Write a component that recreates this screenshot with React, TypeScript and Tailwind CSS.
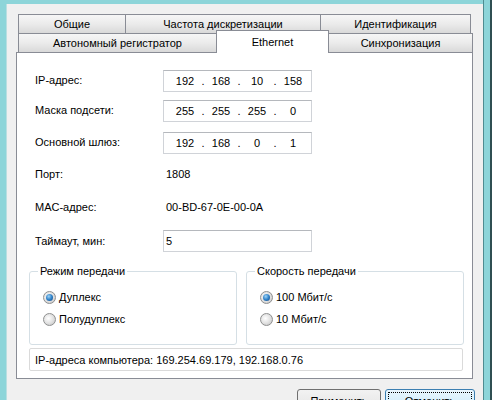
import React from 'react';

function Tab({ label, className }: { label: string; className: string }) {
  return (
    <div
      className={`h-[19px] flex items-center justify-center border-t border-[#898c95] bg-linear-to-b from-[#f6f6f6] via-[#ebebeb] to-[#d9d9d9] ${className}`}
    >
      {label}
    </div>
  );
}

function IpField({ parts }: { parts: string[] }) {
  return (
    <div className="w-[149px] h-[22px] border border-[#d0d3d8] border-t-[#b5b8bd] bg-white flex items-center pl-[6px]">
      {parts.map((p, i) => (
        <React.Fragment key={i}>
          {i > 0 && <span className="w-[6px] text-center">.</span>}
          <span className="w-[30px] text-center">{p}</span>
        </React.Fragment>
      ))}
    </div>
  );
}

function Radio({ label, checked, gap }: { label: string; checked?: boolean; gap: string }) {
  return (
    <div className={`flex items-center h-[14px] ${gap}`}>
      <div className="w-[13px] h-[13px] rounded-full border border-[#8e8f8f] bg-radial-[at_40%_40%] from-white via-[#e2e2e2] to-[#bdbdbd] flex items-center justify-center shrink-0">
        {checked && (
          <div className="w-[7px] h-[7px] rounded-full bg-radial-[at_40%_35%] from-[#9fd3f5] via-[#2f82c9] to-[#133f77]" />
        )}
      </div>
      <span className="ml-[3px]">{label}</span>
    </div>
  );
}

export default function App() {
  return (
    <div className="w-[492px] h-[400px] overflow-hidden flex bg-[#8dd5d9] font-['Liberation_Sans',Arial,sans-serif] text-[11px] text-black leading-[14px]">
      <div className="w-[7px] shrink-0 flex">
        <div className="w-[6px] bg-[#8dd5d9]" />
        <div className="w-[1px] mt-[4px] bg-[#b9dfe1]" />
      </div>

      {/* dialog body */}
      <div className="w-[476px] shrink-0 mt-[4px] bg-[#f0f0f0] flex flex-col">
        {/* tab strip */}
        <div className="flex shrink-0 ml-[11px] mt-[10px]">
          <Tab label="Общие" className="w-[107px] border-l" />
          <Tab label="Частота дискретизации" className="w-[195px] border-l" />
          <Tab label="Идентификация" className="w-[151px] border-l border-r" />
        </div>
        <div className="flex shrink-0 items-end ml-[11px] h-[19px]">
          <Tab label="Автономный регистратор" className="w-[198px] border-l" />
          <div className="relative top-[1px] z-10 w-[113px] h-[23px] bg-white border-t border-l border-r border-[#898c95] flex justify-center pt-[4px]">
            Ethernet
          </div>
          <Tab label="Синхронизация" className="w-[144px] border-r" />
        </div>

        {/* tab page */}
        <div className="ml-[9px] w-[457px] h-[327px] shrink-0 bg-white border border-[#898c95] flex flex-col">
          <div className="flex flex-col pl-[18px] pt-[17px]">
            <div className="flex items-center h-[22px]">
              <span className="w-[128px] -mt-[2px]">IP-адрес:</span>
              <IpField parts={['192', '168', '10', '158']} />
            </div>
            <div className="flex items-center h-[22px] mt-[8px]">
              <span className="w-[128px] -mt-[2px]">Маска подсети:</span>
              <IpField parts={['255', '255', '255', '0']} />
            </div>
            <div className="flex items-center h-[22px] mt-[10px]">
              <span className="w-[128px] -mt-[2px]">Основной шлюз:</span>
              <IpField parts={['192', '168', '0', '1']} />
            </div>
            <div className="flex items-center h-[22px] mt-[9px]">
              <span className="w-[128px]">Порт:</span>
              <span className="pl-[3px]">1808</span>
            </div>
            <div className="flex items-center h-[22px] mt-[11px]">
              <span className="w-[128px]">MAC-адрес:</span>
              <span className="pl-[3px]">00-BD-67-0E-00-0A</span>
            </div>
            <div className="flex items-center h-[22px] mt-[12px]">
              <span className="w-[128px]">Таймаут, мин:</span>
              <div className="w-[149px] h-[22px] border border-[#d0d3d8] border-t-[#b5b8bd] bg-white flex items-center pl-[2px]">
                5
              </div>
            </div>
          </div>

          <div className="flex pl-[12px] mt-[12px] gap-[9px]">
            <fieldset className="w-[208px] h-[81px] border border-[#d5dfe5] rounded-[3px] pl-[13px]">
              <legend className="ml-[-5px] px-[2px]">Режим передачи</legend>
              <Radio label="Дуплекс" checked gap="mt-[12px]" />
              <Radio label="Полудуплекс" gap="mt-[8px]" />
            </fieldset>
            <fieldset className="w-[218px] h-[81px] border border-[#d5dfe5] rounded-[3px] pl-[13px]">
              <legend className="ml-[-5px] px-[2px]">Скорость передачи</legend>
              <Radio label="100 Мбит/с" checked gap="mt-[12px]" />
              <Radio label="10 Мбит/с" gap="mt-[8px]" />
            </fieldset>
          </div>

          <div className="ml-[12px] mt-[3px] w-[434px] h-[23px] border border-[#dadada] rounded-[2px] flex items-center pl-[5px]">
            IP-адреса компьютера: 169.254.69.179, 192.168.0.76
          </div>
        </div>

        {/* buttons */}
        <div className="flex shrink-0 justify-end gap-[4px] pr-[8px] mt-[10px]">
          <div className="w-[84px] h-[23px] rounded-[3px] border border-[#707070] bg-linear-to-b from-[#f2f2f2] via-[#ebebeb] to-[#d6d6d6] flex items-center justify-center">
            Применить
          </div>
          <div className="w-[90px] h-[23px] rounded-[3px] border border-[#3c7fb1] bg-linear-to-b from-[#eaf6fd] via-[#d9f0fc] to-[#bee6fd] p-[2px]">
            <div className="w-full h-full border border-dotted border-black flex items-center justify-center">
              Отменить
            </div>
          </div>
        </div>
      </div>

      <div className="w-[1px] shrink-0 bg-[#4f8c91]" />
      <div className="w-[6px] shrink-0 bg-[#8dd5d9]" />
      <div className="w-[2px] shrink-0 bg-[#2f4f52]" />
    </div>
  );
}
